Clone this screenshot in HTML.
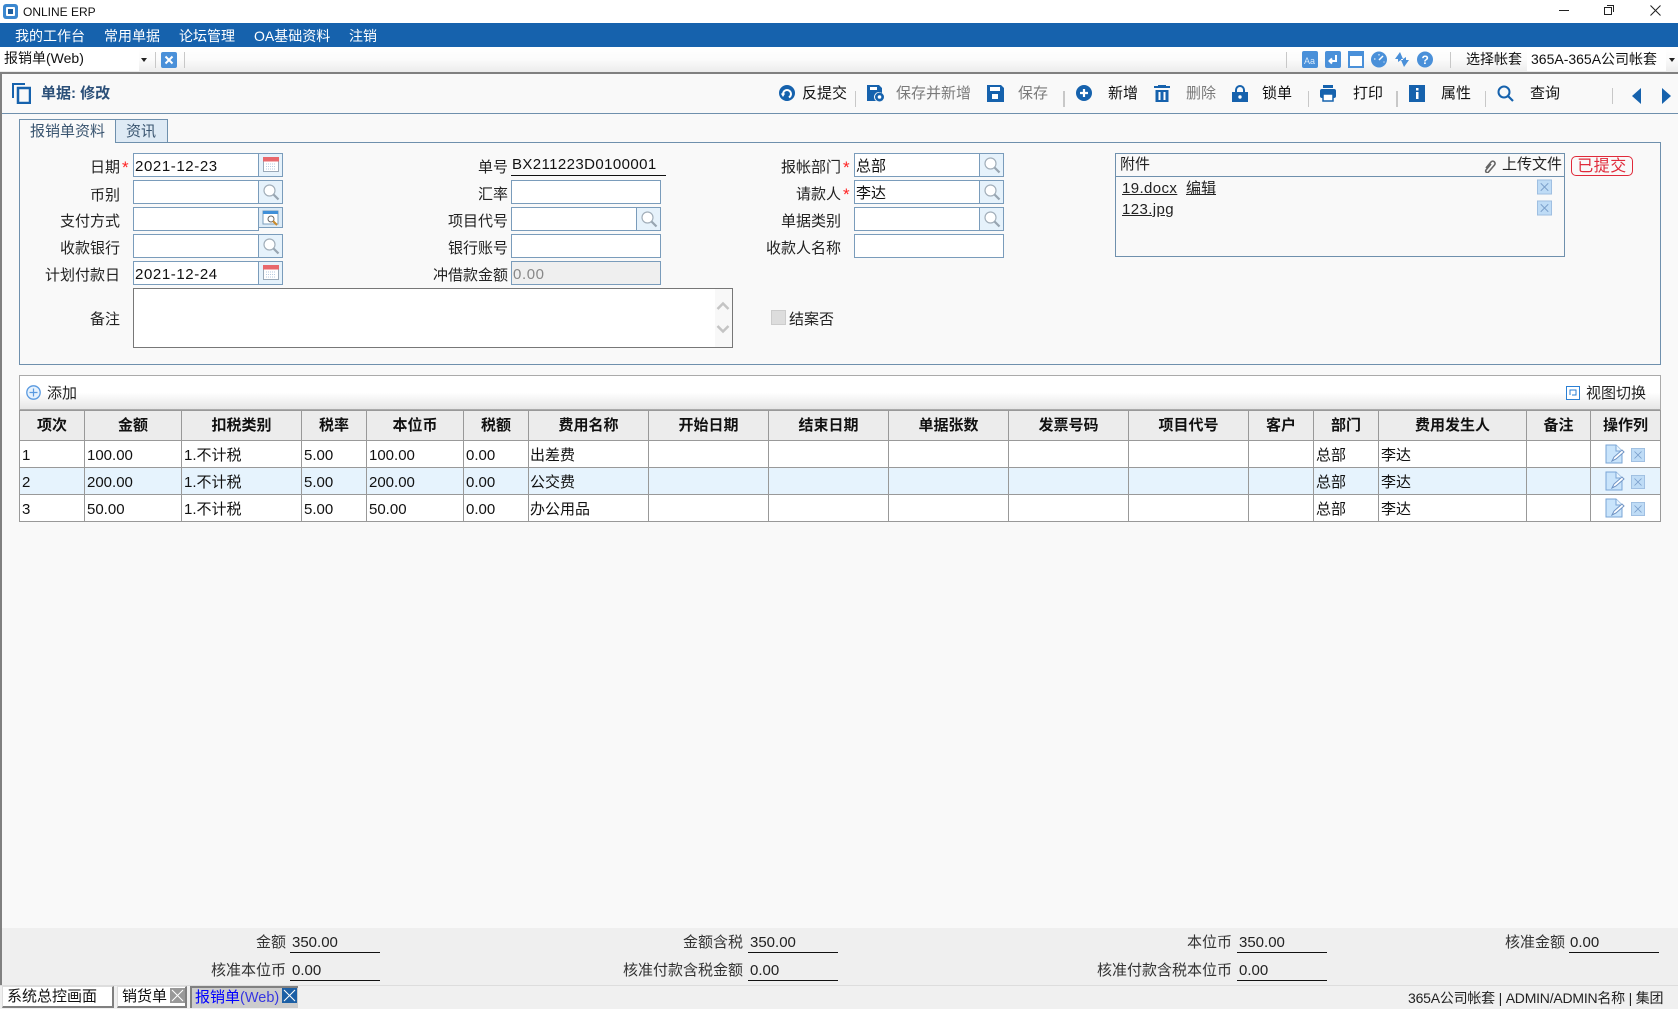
<!DOCTYPE html>
<html lang="zh"><head><meta charset="utf-8"><title>ONLINE ERP</title>
<style>
*{box-sizing:border-box}
html,body{margin:0;padding:0}
body{width:1678px;height:1009px;overflow:hidden;position:relative;background:#f9f9f9;font:15px/20px "Liberation Sans","Noto Sans CJK SC",sans-serif;color:#222}
.a,.l,.t,.i,.b,.s,.u{position:absolute}
.l{width:120px;text-align:right;height:20px;line-height:20px;white-space:nowrap;margin-top:2px}
.l.g{width:140px;margin-left:-20px;margin-top:1px;color:#333}
.t.g{margin-top:1px}
.t{white-space:nowrap;height:20px;line-height:20px}
.i{background:#fff;border:1px solid #7a9cbb;height:24px;padding-left:1px;line-height:25px;letter-spacing:.6px;color:#111;white-space:nowrap}
.b{background:#e6f2fb;border:1px solid #7a9cbb;border-left:0;height:24px;width:24px}
.b svg{position:absolute;left:3px;top:2px}
.s{width:1px;background:#c8c8c8;height:16px}
.u{height:1px;background:#111;width:90px}
.m{color:#fff;font-size:14px;top:26px}
.star{color:#f22;position:absolute;font-size:17px;line-height:20px;margin-top:2px}
svg{display:block}
svg.a{position:absolute}
table{position:absolute;left:19px;top:410px;width:1641px;border-collapse:collapse;table-layout:fixed;background:#fff}
th,td{border:1px solid #999;padding:0 2px;white-space:nowrap;overflow:hidden;font-size:15px;line-height:20px}
th{height:30px;background:#ececec;font-weight:700;text-align:center;color:#111;font-size:15px}
td{height:27px;color:#111;padding-top:3px}
tr.z td{background:#e6f3fd}
</style></head><body>
<svg width="0" height="0" style="position:absolute"><defs>
<symbol id="mag" viewBox="0 0 18 18"><circle cx="7.500" cy="7.500" r="5.500" fill="#fff" stroke="#a3afba" stroke-width="1.200"/><path d="M11.500 11.500l5 5" stroke="#98a5b1" stroke-width="2.200"/></symbol>
<symbol id="cal" viewBox="0 0 18 18"><rect x="1.500" y="1.500" width="15" height="14" fill="#fff" stroke="#9aa9b8"/><rect x="1" y="1" width="16" height="4.500" fill="#e8686c"/><path d="M4 8h10M4 10.500h10M4 13h10" stroke="#b8cbe0" stroke-dasharray="1 1"/></symbol>
<symbol id="x" viewBox="0 0 16 16"><rect x=".5" y=".5" width="15" height="15" fill="#bfdcf6" stroke="#9dbde0"/><path d="M4 4l8 8M12 4l-8 8" stroke="#7b9fcb"/></symbol>
<symbol id="ed" viewBox="0 0 20 20"><path d="M1 1h10l6 6v12H1z" fill="#c9e4fb" stroke="#79a5d6"/><path d="M11 1v6h6" fill="#e8f4fe" stroke="#79a5d6"/><path d="M7 17l2-4 8-7 2 2-8 7z" fill="#fff" stroke="#6f93c4"/></symbol>
</defs></svg>

<!-- title bar -->
<div class="a" style="left:0;top:0;width:1678px;height:23px;background:#fff"></div>
<svg class="a" style="left:3px;top:4px" width="15" height="15" viewBox="0 0 15 15"><rect width="15" height="15" rx="3" fill="#3b87cf"/><rect x="3" y="3" width="9" height="9" rx="1" fill="#fff"/><rect x="5" y="5" width="5" height="5" fill="#1f5f9f"/></svg>
<div class="t" style="left:23px;top:2px;font-size:12px;color:#111">ONLINE ERP</div>
<div class="a" style="left:1559px;top:10px;width:10px;height:1px;background:#222"></div>
<div class="a" style="left:1604px;top:7px;width:8px;height:8px;border:1px solid #222;background:#fff"></div>
<div class="a" style="left:1607px;top:5px;width:7px;height:7px;border:1px solid #222;border-left:0;border-bottom:0"></div>
<svg class="a" style="left:1650px;top:5px" width="11" height="11"><path d="M.5.5l10 10M10.500.5l-10 10" stroke="#222"/></svg>

<!-- menu -->
<div class="a" style="left:0;top:23px;width:1678px;height:24px;background:#1662ad"></div>
<div class="t m" style="left:15px">我的工作台</div>
<div class="t m" style="left:104px">常用单据</div>
<div class="t m" style="left:179px">论坛管理</div>
<div class="t m" style="left:254px">OA基础资料</div>
<div class="t m" style="left:349px">注销</div>

<!-- toolbar 2 -->
<div class="a" style="left:0;top:47px;width:1678px;height:27px;background:linear-gradient(#fff,#fbfbfb 50%,#ececec);border-bottom:2px solid #808080"></div>
<div class="a" style="left:0;top:47px;width:139px;height:24px;background:#fff"></div>
<div class="t" style="left:4px;top:48px;font-size:14px;color:#111">报销单(Web)</div>
<div class="a" style="left:141px;top:58px;border:3px solid transparent;border-top:4px solid #222"></div>
<div class="s" style="left:155px;top:52px"></div><div class="s" style="left:184px;top:52px"></div>
<svg class="a" style="left:161px;top:52px" width="16" height="16"><rect width="16" height="16" rx="2" fill="#4a90d9"/><path d="M4.500 4.500l7 7M11.500 4.500l-7 7" stroke="#fff" stroke-width="2"/></svg>
<div class="s" style="left:1286px;top:52px"></div>
<svg class="a" style="left:1302px;top:51px" width="16" height="17"><rect width="16" height="17" rx="2" fill="#4a90d9"/><text x="2" y="13" font-size="9" fill="#dcecfb" font-family="Liberation Sans">Aa</text></svg>
<svg class="a" style="left:1325px;top:51px" width="16" height="17"><rect width="16" height="17" rx="2" fill="#4a90d9"/><path d="M11 4v6H5M7 7.500L4.500 10 7 12.500" stroke="#fff" stroke-width="2" fill="none"/></svg>
<svg class="a" style="left:1348px;top:51px" width="16" height="17"><rect x="1" y="1" width="14" height="15" fill="#fff" stroke="#4a90d9" stroke-width="2"/><rect x="1" y="1" width="14" height="4" fill="#4a90d9"/></svg>
<svg class="a" style="left:1371px;top:51px" width="16" height="17"><circle cx="8" cy="8.500" r="8" fill="#4a90d9"/><path d="M8 9l4-4" stroke="#fff" stroke-width="1.500"/><path d="M3 8h1.500M8 3v1.500M12.500 11h1" stroke="#fff"/></svg>
<svg class="a" style="left:1394px;top:51px" width="16" height="17"><path d="M6 1L1 8h3v3l3-2V8h2zM10 16l5-7h-3V6L9 8v1H7z" fill="#4a90d9"/></svg>
<svg class="a" style="left:1417px;top:51px" width="16" height="17"><circle cx="8" cy="8.500" r="8" fill="#4a90d9"/><text x="4.500" y="13" font-size="12" font-weight="700" fill="#fff" font-family="Liberation Sans">?</text></svg>
<div class="s" style="left:1450px;top:52px"></div>
<div class="t" style="left:1466px;top:49px;font-size:14px;color:#111">选择帐套</div>
<div class="a" style="left:1527px;top:47px;width:139px;height:24px;background:#fff"></div>
<div class="t" style="left:1531px;top:49px;font-size:14px;color:#111">365A-365A公司帐套</div>
<div class="a" style="left:1669px;top:58px;border:3px solid transparent;border-top:4px solid #222"></div>

<!-- left border / header -->
<div class="a" style="left:0;top:74px;width:2px;height:911px;background:#808080"></div>
<div class="a" style="left:2px;top:113px;width:1676px;height:1px;background:#6f90ad"></div>
<svg class="a" style="left:12px;top:83px" width="19" height="21"><path d="M13 1H1v14" fill="none" stroke="#1662ad" stroke-width="2"/><rect x="6" y="5" width="12" height="15" fill="none" stroke="#1662ad" stroke-width="2.500"/></svg>
<div class="t" style="left:41px;top:84px;font-size:15px;font-weight:700;color:#2b4f78">单据: 修改</div>

<svg class="a" style="left:779px;top:85px" width="16" height="17" viewBox="0 0 16 17"><circle cx="8" cy="8" r="8" fill="#1662ad"/><path d="M4 9a4 4 0 1 1 8 0c0 1.500-.7 2.500-2 3.500" fill="none" stroke="#fff" stroke-width="2"/><path d="M1.800 8.500h4.400L4 12z" fill="#fff"/><rect x="6.500" y="10" width="2.500" height="6" fill="#1662ad"/></svg>
<div class="t" style="left:802px;top:84px;font-size:15px;color:#111">反提交</div>
<div class="s" style="left:855px;top:91px"></div>
<svg class="a" style="left:867px;top:85px" width="17" height="17"><path d="M0 0h12l3 3v5a5 5 0 0 0-6 8H0z" fill="#1662ad"/><rect x="3" y="2" width="7" height="3" fill="#fff"/><circle cx="12.500" cy="12" r="4.500" fill="#1662ad"/><circle cx="12.500" cy="12" r="1.800" fill="#fff"/></svg>
<div class="t" style="left:896px;top:84px;font-size:15px;color:#7a7a7a">保存并新增</div>
<svg class="a" style="left:987px;top:85px" width="17" height="17"><path d="M0 0h14l3 3v14H0z" fill="#1662ad"/><rect x="3" y="2" width="10" height="4" fill="#fff"/><rect x="5" y="9" width="6" height="5" fill="#fff"/></svg>
<div class="t" style="left:1018px;top:84px;font-size:15px;color:#7a7a7a">保存</div>
<div class="s" style="left:1063px;top:91px;width:2px"></div>
<svg class="a" style="left:1076px;top:85px" width="16" height="16"><circle cx="8" cy="8" r="8" fill="#1662ad"/><path d="M4 8h8M8 4v8" stroke="#fff" stroke-width="2.200"/></svg>
<div class="t" style="left:1108px;top:84px;font-size:15px;color:#111">新增</div>
<svg class="a" style="left:1154px;top:85px" width="16" height="17"><path d="M0 2h16M4 0h8" stroke="#1662ad" stroke-width="2"/><path d="M1.500 5h13v12h-13z" fill="#1662ad"/><path d="M5.500 7v8M10.500 7v8" stroke="#fff" stroke-width="2"/></svg>
<div class="t" style="left:1186px;top:84px;font-size:15px;color:#7a7a7a">删除</div>
<svg class="a" style="left:1232px;top:85px" width="16" height="17"><path d="M4 8V5a4 4 0 0 1 8 0v3" fill="none" stroke="#1662ad" stroke-width="2"/><rect y="7" width="16" height="10" fill="#1662ad"/><circle cx="8" cy="12" r="1.700" fill="#fff"/></svg>
<div class="t" style="left:1262px;top:84px;font-size:15px;color:#111">锁单</div>
<div class="s" style="left:1308px;top:91px"></div>
<svg class="a" style="left:1320px;top:85px" width="16" height="17"><rect x="3" y="0" width="10" height="3" fill="#1662ad"/><rect y="4" width="16" height="9" rx="2" fill="#1662ad"/><rect x="3" y="9" width="10" height="7" fill="#fff" stroke="#1662ad" stroke-width="1.500"/></svg>
<div class="t" style="left:1353px;top:84px;font-size:15px;color:#111">打印</div>
<div class="s" style="left:1396px;top:91px;width:2px"></div>
<svg class="a" style="left:1409px;top:85px" width="16" height="17"><rect width="16" height="17" fill="#1662ad"/><rect x="7" y="3" width="2.500" height="2.500" fill="#fff"/><rect x="7" y="7" width="2.500" height="7" fill="#fff"/></svg>
<div class="t" style="left:1441px;top:84px;font-size:15px;color:#111">属性</div>
<div class="s" style="left:1485px;top:91px"></div>
<svg class="a" style="left:1497px;top:85px" width="17" height="17"><circle cx="7" cy="7" r="5.500" fill="none" stroke="#1662ad" stroke-width="2"/><path d="M11 11l5 5" stroke="#1662ad" stroke-width="2.200"/></svg>
<div class="t" style="left:1530px;top:84px;font-size:15px;color:#111">查询</div>
<div class="s" style="left:1612px;top:88px"></div>
<svg class="a" style="left:1632px;top:88px" width="10" height="16"><path d="M9 0v16L0 8z" fill="#1662ad"/></svg>
<svg class="a" style="left:1661px;top:88px" width="10" height="16"><path d="M1 0v16l9-8z" fill="#1662ad"/></svg>

<!-- tabs & panel -->
<div class="a" style="left:19px;top:142px;width:1642px;height:223px;border:1px solid #6f90ad"></div>
<div class="a" style="left:19px;top:119px;width:97px;height:24px;border:1px solid #6f90ad;border-bottom:0;background:#f9f9f9"></div>
<div class="a" style="left:115px;top:119px;width:53px;height:24px;border:1px solid #6f90ad;background:#deeaf5"></div>
<div class="t" style="left:30px;top:122px;color:#3a5570">报销单资料</div>
<div class="t" style="left:126px;top:122px;color:#3a5570">资讯</div>

<!-- col1 -->
<div class="l" style="left:0;top:156px">日期</div><div class="star" style="left:122px;top:156px">*</div>
<div class="l" style="left:0;top:184px">币别</div>
<div class="l" style="left:0;top:210px">支付方式</div>
<div class="l" style="left:0;top:237px">收款银行</div>
<div class="l" style="left:0;top:264px">计划付款日</div>
<div class="l" style="left:0;top:308px">备注</div>
<div class="i" style="left:133px;top:153px;width:126px">2021-12-23</div><div class="b" style="left:259px;top:153px"><svg width="18" height="18"><use href="#cal"/></svg></div>
<div class="i" style="left:133px;top:180px;width:126px"></div><div class="b" style="left:259px;top:180px"><svg width="18" height="18"><use href="#mag"/></svg></div>
<div class="i" style="left:133px;top:207px;width:126px"></div><div class="b" style="left:259px;top:207px;height:21px;background:#dcebf7"><svg width="18" height="16"><rect x="1" y="1" width="15" height="13" fill="#fff" stroke="#7a9cbb"/><rect x="1" y="1" width="15" height="3" fill="#3f8fd8"/><circle cx="9" cy="9" r="3" fill="none" stroke="#666"/><path d="M11 11l4 4" stroke="#c98a2b" stroke-width="2"/></svg></div>
<div class="i" style="left:133px;top:234px;width:126px"></div><div class="b" style="left:259px;top:234px"><svg width="18" height="18"><use href="#mag"/></svg></div>
<div class="i" style="left:133px;top:261px;width:126px">2021-12-24</div><div class="b" style="left:259px;top:261px"><svg width="18" height="18"><use href="#cal"/></svg></div>
<div class="a" style="left:133px;top:288px;width:600px;height:60px;background:#fff;border:1px solid #777"></div>
<div class="a" style="left:715px;top:289px;width:17px;height:58px;background:#f8f8f8"></div>
<svg class="a" style="left:716px;top:301px" width="14" height="36"><path d="M1.500 8l5.500-5.500 5.500 5.500M1.500 25l5.500 5.500 5.500-5.500" fill="none" stroke="#c4c4c4" stroke-width="2.500"/></svg>

<!-- col2 -->
<div class="l" style="left:388px;top:156px">单号</div>
<div class="t" style="left:512px;top:155px;letter-spacing:.4px;color:#111">BX211223D0100001</div>
<div class="a" style="left:511px;top:175px;width:155px;height:1px;background:#111"></div>
<div class="l" style="left:388px;top:183px">汇率</div>
<div class="l" style="left:388px;top:210px">项目代号</div>
<div class="l" style="left:388px;top:237px">银行账号</div>
<div class="l" style="left:388px;top:264px">冲借款金额</div>
<div class="i" style="left:511px;top:180px;width:150px"></div>
<div class="i" style="left:511px;top:207px;width:126px"></div><div class="b" style="left:637px;top:207px"><svg width="18" height="18"><use href="#mag"/></svg></div>
<div class="i" style="left:511px;top:234px;width:150px"></div>
<div class="i" style="left:511px;top:261px;width:150px;background:#efefef;color:#888">0.00</div>

<!-- col3 -->
<div class="l" style="left:721px;top:156px">报帐部门</div><div class="star" style="left:843px;top:156px">*</div>
<div class="l" style="left:721px;top:183px">请款人</div><div class="star" style="left:843px;top:183px">*</div>
<div class="l" style="left:721px;top:210px">单据类别</div>
<div class="l" style="left:721px;top:237px">收款人名称</div>
<div class="i" style="left:854px;top:153px;width:126px;letter-spacing:0">总部</div><div class="b" style="left:980px;top:153px"><svg width="18" height="18"><use href="#mag"/></svg></div>
<div class="i" style="left:854px;top:180px;width:126px;letter-spacing:0">李达</div><div class="b" style="left:980px;top:180px"><svg width="18" height="18"><use href="#mag"/></svg></div>
<div class="i" style="left:854px;top:207px;width:126px"></div><div class="b" style="left:980px;top:207px"><svg width="18" height="18"><use href="#mag"/></svg></div>
<div class="i" style="left:854px;top:234px;width:150px"></div>
<div class="a" style="left:771px;top:310px;width:15px;height:15px;background:#ddd;border:1px solid #ccc"></div>
<div class="t" style="left:789px;top:310px">结案否</div>

<!-- attachments -->
<div class="a" style="left:1115px;top:153px;width:450px;height:104px;border:1px solid #6f90ad"></div>
<div class="a" style="left:1115px;top:176px;width:450px;height:1px;background:#6f90ad"></div>
<div class="t" style="left:1120px;top:155px">附件</div>
<svg class="a" style="left:1483px;top:159px" width="14" height="14"><path d="M3 9l5-6a2.200 2.200 0 0 1 3.500 3l-6 7a1.500 1.500 0 0 1-2.500-2l5-6" fill="none" stroke="#666" stroke-width="1.600"/></svg>
<div class="t" style="left:1502px;top:155px">上传文件</div>
<div class="t" style="left:1122px;top:179px;text-decoration:underline;letter-spacing:.4px">19.docx</div>
<div class="t" style="left:1186px;top:179px;text-decoration:underline">编辑</div>
<div class="t" style="left:1122px;top:200px;text-decoration:underline;letter-spacing:.4px">123.jpg</div>
<svg class="a" style="left:1537px;top:179px" width="15" height="16"><use href="#x"/></svg>
<svg class="a" style="left:1537px;top:200px" width="15" height="16"><use href="#x"/></svg>
<div class="a" style="left:1571px;top:156px;width:62px;height:20px;border:1px solid #e02a3a;border-radius:5px;color:#e02a3a;font-size:16px;line-height:19px;text-align:center;white-space:nowrap;letter-spacing:.5px">已提交</div>

<!-- grid toolbar -->
<div class="a" style="left:19px;top:375px;width:1642px;height:36px;border:1px solid #aaa;border-bottom:2px solid #aaa;background:linear-gradient(#fff,#fff 50%,#e6e6e6)"></div>
<svg class="a" style="left:26px;top:385px" width="15" height="15"><circle cx="7.500" cy="7.500" r="6.700" fill="#e6f2fd" stroke="#5a9ae0" stroke-width="1.300"/><path d="M3.500 7.500h8M7.500 3.500v8" stroke="#5a9ae0" stroke-width="1.200"/></svg>
<div class="t" style="left:47px;top:384px">添加</div>
<svg class="a" style="left:1566px;top:386px" width="14" height="14"><rect x=".5" y=".5" width="13" height="13" fill="#fff" stroke="#2a7fd4"/><path d="M4 9V4h6v5H6" fill="none" stroke="#2a7fd4"/></svg>
<div class="t" style="left:1586px;top:384px">视图切换</div>

<table>
<colgroup><col style="width:65px"><col style="width:97px"><col style="width:120px"><col style="width:65px"><col style="width:97px"><col style="width:65px"><col style="width:120px"><col style="width:120px"><col style="width:120px"><col style="width:120px"><col style="width:120px"><col style="width:120px"><col style="width:65px"><col style="width:65px"><col style="width:148px"><col style="width:64px"><col style="width:70px"></colgroup>
<tr><th>项次</th><th>金额</th><th>扣税类别</th><th>税率</th><th>本位币</th><th>税额</th><th>费用名称</th><th>开始日期</th><th>结束日期</th><th>单据张数</th><th>发票号码</th><th>项目代号</th><th>客户</th><th>部门</th><th>费用发生人</th><th>备注</th><th>操作列</th></tr>
<tr><td>1</td><td>100.00</td><td>1.不计税</td><td>5.00</td><td>100.00</td><td>0.00</td><td style="padding-left:1px">出差费</td><td></td><td></td><td></td><td></td><td></td><td></td><td>总部</td><td>李达</td><td></td><td></td></tr>
<tr class="z"><td>2</td><td>200.00</td><td>1.不计税</td><td>5.00</td><td>200.00</td><td>0.00</td><td style="padding-left:1px">公交费</td><td></td><td></td><td></td><td></td><td></td><td></td><td>总部</td><td>李达</td><td></td><td></td></tr>
<tr><td>3</td><td>50.00</td><td>1.不计税</td><td>5.00</td><td>50.00</td><td>0.00</td><td style="padding-left:1px">办公用品</td><td></td><td></td><td></td><td></td><td></td><td></td><td>总部</td><td>李达</td><td></td><td></td></tr>
</table>
<svg class="a" style="left:1605px;top:444px" width="20" height="20"><use href="#ed"/></svg><svg class="a" style="left:1631px;top:448px" width="14" height="14"><use href="#x"/></svg>
<svg class="a" style="left:1605px;top:471px" width="20" height="20"><use href="#ed"/></svg><svg class="a" style="left:1631px;top:475px" width="14" height="14"><use href="#x"/></svg>
<svg class="a" style="left:1605px;top:498px" width="20" height="20"><use href="#ed"/></svg><svg class="a" style="left:1631px;top:502px" width="14" height="14"><use href="#x"/></svg>

<!-- footer totals -->
<div class="a" style="left:2px;top:928px;width:1676px;height:57px;background:#efefef"></div>
<div class="l g" style="left:166px;top:932px">金额</div><div class="t g" style="left:292px;top:932px">350.00</div><div class="u" style="left:290px;top:952px"></div>
<div class="l g" style="left:166px;top:960px">核准本位币</div><div class="t g" style="left:292px;top:960px">0.00</div><div class="u" style="left:290px;top:980px"></div>
<div class="l g" style="left:623px;top:932px">金额含税</div><div class="t g" style="left:750px;top:932px">350.00</div><div class="u" style="left:748px;top:952px"></div>
<div class="l g" style="left:623px;top:960px">核准付款含税金额</div><div class="t g" style="left:750px;top:960px">0.00</div><div class="u" style="left:748px;top:980px"></div>
<div class="l g" style="left:1112px;top:932px">本位币</div><div class="t g" style="left:1239px;top:932px">350.00</div><div class="u" style="left:1237px;top:952px"></div>
<div class="l g" style="left:1112px;top:960px">核准付款含税本位币</div><div class="t g" style="left:1239px;top:960px">0.00</div><div class="u" style="left:1237px;top:980px"></div>
<div class="l g" style="left:1445px;top:932px">核准金额</div><div class="t g" style="left:1570px;top:932px">0.00</div><div class="u" style="left:1569px;top:952px"></div>

<!-- status bar -->
<div class="a" style="left:0;top:985px;width:1678px;height:24px;background:#f0f0f0;border-top:1px solid #ddd"></div>
<div class="a" style="left:2px;top:986px;width:112px;height:22px;background:#fff;border:1px solid #ddd;border-right:2px solid #808080;border-bottom:2px solid #808080"></div>
<div class="t" style="left:7px;top:987px;color:#111">系统总控画面</div>
<div class="a" style="left:117px;top:986px;width:70px;height:22px;background:#fff;border:1px solid #ddd;border-right:2px solid #808080;border-bottom:2px solid #808080"></div>
<div class="t" style="left:122px;top:987px;color:#111">销货单</div>
<svg class="a" style="left:170px;top:988px" width="15" height="15"><rect width="15" height="15" fill="#999"/><path d="M2 2l11 11M13 2L2 13" stroke="#fff"/></svg>
<div class="a" style="left:190px;top:986px;width:108px;height:22px;background:#ccc;border-left:2px solid #808080;border-top:2px solid #808080"></div>
<div class="t" style="left:195px;top:988px;color:#00f;font-size:15px">报销单<span style="font-size:14.500px;color:#3535e0">(Web)</span></div>
<svg class="a" style="left:282px;top:988px" width="15" height="15"><rect width="15" height="15" fill="#1c5fa5"/><path d="M2 2l11 11M13 2L2 13" stroke="#fff"/></svg>
<div class="t" style="left:1408px;top:988px;font-size:14px;color:#222;letter-spacing:-.22px">365A公司帐套 | ADMIN/ADMIN名称 | 集团</div>
</body></html>
